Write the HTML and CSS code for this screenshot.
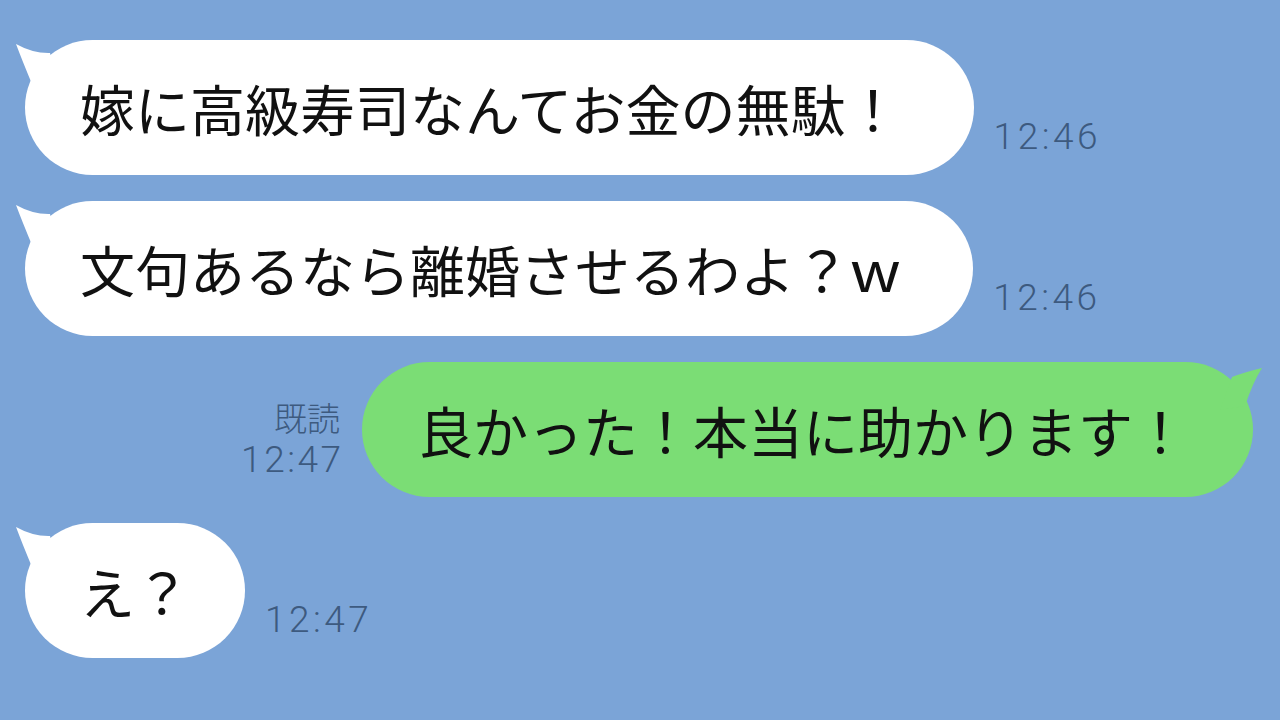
FILE: index.html
```html
<!DOCTYPE html>
<html lang="ja">
<head>
<meta charset="utf-8">
<link rel="stylesheet" href="styles.css">
</head>
<body>
<div class="chat">
  <div class="row left">
    <div class="bubble white b1">
      <svg class="tail tail-l" width="50" height="50" viewBox="0 0 50 50"><path d="M3 4 Q20 13.5 37 13 L45 48 L19 44 Q9 20 3 4 Z"/></svg>
      <span class="text">嫁に高級寿司なんてお金の無駄！</span>
    </div>
    <div class="meta"><div class="time">12:46</div></div>
  </div>
  <div class="row left">
    <div class="bubble white b2">
      <svg class="tail tail-l" width="50" height="50" viewBox="0 0 50 50"><path d="M3 4 Q20 13.5 37 13 L45 48 L19 44 Q9 20 3 4 Z"/></svg>
      <span class="text">文句あるなら離婚させるわよ？<span class="w">w</span></span>
    </div>
    <div class="meta"><div class="time">12:46</div></div>
  </div>
  <div class="row right">
    <div class="meta meta-right">
      <div class="read">既読</div>
      <div class="time">12:47</div>
    </div>
    <div class="bubble green">
      <svg class="tail tail-r" width="50" height="50" viewBox="0 0 50 50"><path d="M47 6 Q30 10 17 15 L5 48 L30 44 Q38 20 47 6 Z"/></svg>
      <span class="text">良かった！本当に助かります！</span>
    </div>
  </div>
  <div class="row left">
    <div class="bubble white b4">
      <svg class="tail tail-l" width="50" height="50" viewBox="0 0 50 50"><path d="M3 4 Q20 13.5 37 13 L45 48 L19 44 Q9 20 3 4 Z"/></svg>
      <span class="text">え？</span>
    </div>
    <div class="meta"><div class="time">12:47</div></div>
  </div>
</div>
</body>
</html>
```

FILE: styles.css
```css
html, body {
  margin: 0;
  padding: 0;
}
body {
  width: 1280px;
  height: 720px;
  background: #7ba4d7;
  overflow: hidden;
  font-family: "Noto Sans CJK JP", "Noto Sans", sans-serif;
}
.chat {
  display: flex;
  flex-direction: column;
  gap: 26px;
  padding-top: 40px;
}
.row {
  display: flex;
  align-items: flex-end;
}
.row.left {
  padding-left: 25px;
}
.row.right {
  justify-content: flex-end;
  padding-right: 27px;
}
.bubble {
  position: relative;
  height: 135px;
  border-radius: 67.5px;
  display: flex;
  align-items: center;
  box-sizing: border-box;
  font-size: 55px;
  line-height: 1;
  color: #111;
}
.bubble.white {
  background: #fff;
  fill: #fff;
}
.bubble.green {
  background: #7bdd75;
  fill: #7bdd75;
  padding: 0 65px 0 56px;
}
.b1 {
  padding: 0 73px 0 55px;
}
.b2 {
  padding: 0 79px 0 55px;
}
.w {
  display: inline-block;
  transform: scaleX(1.15);
  transform-origin: left center;
}
.b4 {
  padding: 0 55px 0 55px;
}
.text {
  position: relative;
  white-space: nowrap;
}
.tail {
  position: absolute;
  top: 0;
}
.tail-l {
  left: -12px;
}
.tail-r {
  right: -12px;
}
.meta {
  margin-left: 20px;
  margin-bottom: 20px;
  color: #3d5a7f;
}
.meta-right {
  margin-left: 0;
  margin-right: 22px;
  margin-bottom: 19px;
  display: flex;
  flex-direction: column;
  align-items: flex-end;
}
.time {
  font-family: Roboto, "Noto Sans", sans-serif;
  font-weight: 300;
  font-size: 37px;
  line-height: 36px;
  letter-spacing: 3.5px;
}
.meta-right .time {
  margin-right: -3.5px;
  letter-spacing: 2.5px;
}
.read {
  font-family: "Noto Sans CJK JP", sans-serif;
  font-weight: 300;
  font-size: 33px;
  line-height: 50px;
}
```
